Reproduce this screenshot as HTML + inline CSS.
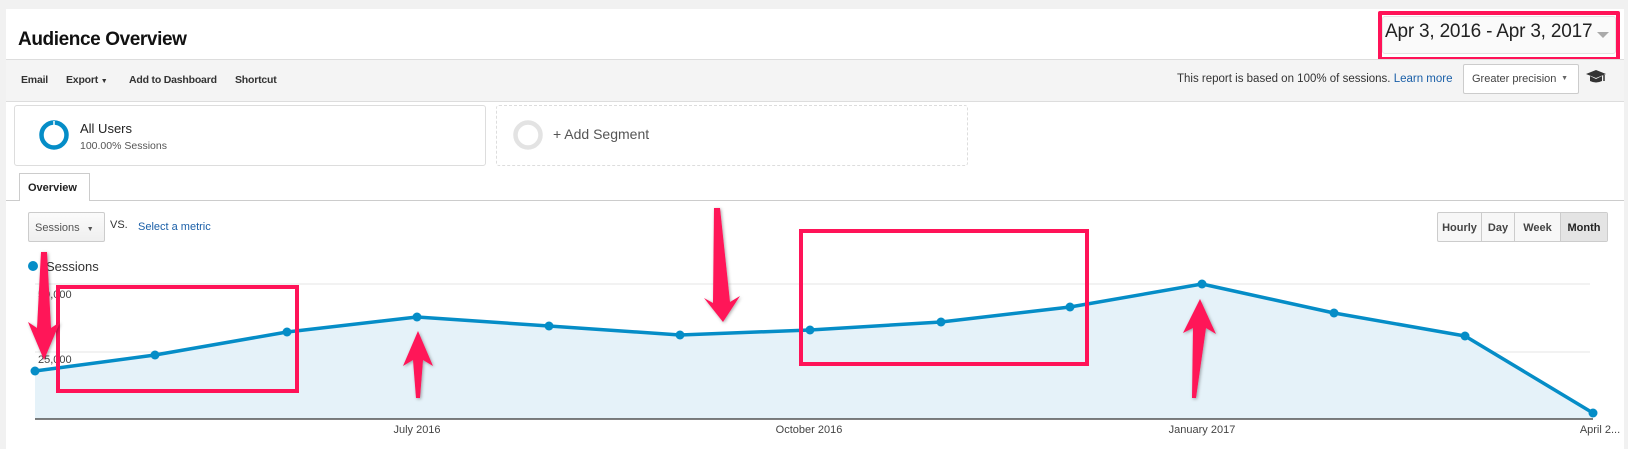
<!DOCTYPE html>
<html><head><meta charset="utf-8"><style>
*{box-sizing:border-box;margin:0;padding:0}
body{width:1628px;height:436px;background:#f1f1f1;font-family:"Liberation Sans",sans-serif;position:relative;overflow:hidden;color:#222}
.abs{position:absolute;white-space:nowrap}
.panel{left:6px;top:9px;width:1618px;height:440px;background:#fff}
.tb{left:6px;top:59px;width:1618px;height:43px;background:#f4f4f4;border-top:1px solid #ddd;border-bottom:1px solid #ddd}
.tbi{top:74px;font-size:10.5px;font-weight:bold;color:#333;letter-spacing:-0.2px}
.btn{border:1px solid #ccc;border-radius:2px;background:linear-gradient(#fbfbfb,#efefef);font-size:11px;color:#444}
</style></head><body>
<div class="abs panel"></div>
<div class="abs" style="left:18px;top:29px;font-size:19px;font-weight:bold;color:#111;letter-spacing:-0.4px">Audience Overview</div>
<div class="abs" style="left:1382px;top:16px;width:234px;height:38px;border:1px solid #e4e4e4;border-radius:3px;background:#fafafa"></div>
<div class="abs" style="left:1385px;top:21px;font-size:19px;color:#222;letter-spacing:-0.2px">Apr 3, 2016 - Apr 3, 2017</div>
<div class="abs" style="left:1597px;top:32px;width:0;height:0;border-left:6px solid transparent;border-right:6px solid transparent;border-top:6px solid #aaa"></div>
<div class="abs" style="left:1378px;top:11px;width:242px;height:50px;border:4px solid #ff1358;border-radius:2px"></div>
<div class="abs tb"></div>
<div class="abs tbi" style="left:21px">Email</div>
<div class="abs tbi" style="left:66px">Export <span style="font-size:7px">▼</span></div>
<div class="abs tbi" style="left:129px">Add to Dashboard</div>
<div class="abs tbi" style="left:235px">Shortcut</div>
<div class="abs" style="left:1177px;top:73px;font-size:11.5px;color:#333">This report is based on 100% of sessions. <span style="color:#1a5fa8">Learn more</span></div>
<div class="abs btn" style="left:1463px;top:64px;width:116px;height:30px;background:#fff;padding:8px 8px;font-size:11px">Greater precision<span style="position:absolute;right:10px;top:10px;font-size:7px;color:#666">▼</span></div>
<svg class="abs" style="left:1585px;top:68px" width="22" height="18" viewBox="0 0 22 18"><path d="M1 6 L11 2 L21 6 L11 10Z" fill="#333"/><path d="M5 8 V13 Q11 16 17 13 V8 L11 11Z" fill="#333"/><path d="M19 7 V13" stroke="#333" stroke-width="1.5"/></svg>
<div class="abs" style="left:14px;top:105px;width:472px;height:61px;border:1px solid #ddd;border-radius:3px"></div>
<svg class="abs" style="left:38px;top:119px" width="32" height="32"><circle cx="16" cy="16" r="12.5" fill="none" stroke="#058dc7" stroke-width="4.5"/><path d="M16 2 V6" stroke="#fff" stroke-width="1.5"/></svg>
<div class="abs" style="left:80px;top:121px;font-size:13px;color:#222">All Users</div>
<div class="abs" style="left:80px;top:140px;font-size:10.5px;color:#555">100.00% Sessions</div>
<div class="abs" style="left:496px;top:105px;width:472px;height:61px;border:1px dashed #ddd;border-radius:3px"></div>
<svg class="abs" style="left:512px;top:119px" width="32" height="32"><circle cx="16" cy="16" r="12.5" fill="none" stroke="#e3e3e3" stroke-width="4.5"/></svg>
<div class="abs" style="left:553px;top:126px;font-size:14px;color:#555">+ Add Segment</div>
<div class="abs" style="left:6px;top:200px;width:1618px;border-top:1px solid #ccc"></div>
<div class="abs" style="left:19px;top:173px;width:71px;height:28px;border:1px solid #ccc;border-bottom:none;background:#fff;font-size:11px;font-weight:bold;padding:8px 0 0 8px">Overview</div>
<div class="abs btn" style="left:28px;top:212px;width:77px;height:30px;padding:9px 6px;font-size:11px;color:#555">Sessions <span style="font-size:7px;margin-left:4px">▼</span></div>
<div class="abs" style="left:110px;top:219px;font-size:11px;color:#333">VS.</div>
<div class="abs" style="left:138px;top:221px;font-size:11px;color:#1a5fa8">Select a metric</div>
<div class="abs" style="left:1437px;top:212px;height:30px;display:flex;font-size:11px;font-weight:bold;color:#444;border:1px solid #ccc;border-radius:2px;background:#f7f7f7">
<div style="width:44px;text-align:center;padding-top:9px;border-right:1px solid #ccc">Hourly</div>
<div style="width:33px;text-align:center;padding-top:9px;border-right:1px solid #ccc">Day</div>
<div style="width:46px;text-align:center;padding-top:9px;border-right:1px solid #ccc">Week</div>
<div style="width:46px;text-align:center;padding-top:9px;background:#e4e4e4;color:#222">Month</div></div>
<svg class="abs" style="left:0;top:0" width="1628" height="436">
<defs><filter id="sh" x="-50%" y="-20%" width="200%" height="140%"><feDropShadow dx="1" dy="1" stdDeviation="1.5" flood-color="#000" flood-opacity="0.35"/></filter></defs>
<circle cx="33" cy="266" r="5" fill="#058dc7"/>
<text x="46" y="271" font-size="13" fill="#333" font-family="Liberation Sans">Sessions</text>
<line x1="35" y1="284" x2="1590" y2="284" stroke="#e6e6e6"/>
<line x1="35" y1="352" x2="1590" y2="352" stroke="#e6e6e6"/>
<text x="38" y="298" font-size="11" fill="#444" font-family="Liberation Sans">50,000</text>
<text x="38" y="363" font-size="11" fill="#444" font-family="Liberation Sans">25,000</text>
<path d="M35 371 L155 355 L287 332 L417 317 L549 326 L680 335 L810 330 L941 322 L1070 307 L1202 284 L1334 313 L1465 336 L1593 413 L1593 419 L35 419Z" fill="#e5f2f9"/>
<line x1="35" y1="419" x2="1593" y2="419" stroke="#333" stroke-width="1.2"/>
<polyline points="35,371 155,355 287,332 417,317 549,326 680,335 810,330 941,322 1070,307 1202,284 1334,313 1465,336 1593,413" fill="none" stroke="#058dc7" stroke-width="3.5" stroke-linejoin="round"/>
<g fill="#058dc7"><circle cx="35" cy="371" r="4.5"/><circle cx="155" cy="355" r="4.5"/><circle cx="287" cy="332" r="4.5"/><circle cx="417" cy="317" r="4.5"/><circle cx="549" cy="326" r="4.5"/><circle cx="680" cy="335" r="4.5"/><circle cx="810" cy="330" r="4.5"/><circle cx="941" cy="322" r="4.5"/><circle cx="1070" cy="307" r="4.5"/><circle cx="1202" cy="284" r="4.5"/><circle cx="1334" cy="313" r="4.5"/><circle cx="1465" cy="336" r="4.5"/><circle cx="1593" cy="413" r="4.5"/></g>
<g font-size="11" fill="#444" font-family="Liberation Sans" text-anchor="middle"><text x="417" y="433">July 2016</text><text x="809" y="433">October 2016</text><text x="1202" y="433">January 2017</text><text x="1600" y="433">April 2...</text></g>
<g fill="none" stroke="#ff1358" stroke-width="4"><rect x="58" y="287" width="239" height="104"/><rect x="801" y="231" width="286" height="133"/></g>
<g fill="#ff1358" filter="url(#sh)">
<path d="M41 252 L47 252 L51 328 L60 322 L44 360 L28 322 L37 328Z"/>
<path d="M418 331 L433 366 L423 360 L420 398 L416 398 L413 360 L403 366Z"/>
<path d="M714 208 L720 208 L730 302 L740 296 L723 322 L704 298 L713 303Z"/>
<path d="M1200 299 L1216 334 L1206 328 L1196 398 L1192 398 L1193 328 L1183 333Z"/>
</g>
</svg>
</body></html>
